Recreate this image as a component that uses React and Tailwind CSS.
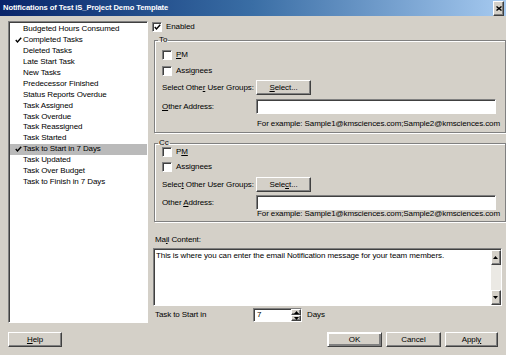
import React from 'react';

const items = [
  { label: 'Budgeted Hours Consumed' },
  { label: 'Completed Tasks', checked: true },
  { label: 'Deleted Tasks' },
  { label: 'Late Start Task' },
  { label: 'New Tasks' },
  { label: 'Predecessor Finished' },
  { label: 'Status Reports Overdue' },
  { label: 'Task Assigned' },
  { label: 'Task Overdue' },
  { label: 'Task Reassigned' },
  { label: 'Task Started' },
  { label: 'Task to Start in 7 Days', checked: true, selected: true },
  { label: 'Task Updated' },
  { label: 'Task Over Budget' },
  { label: 'Task to Finish in 7 Days' },
];

function Tick({ className = '' }) {
  return (
    <svg width="7" height="6" viewBox="0 0 8 7" className={className}>
      <path d="M0.8 3.6 L2.8 5.8 L7.2 0.8" fill="none" stroke="#000" strokeWidth="1.6" />
    </svg>
  );
}

function Box({ checked }) {
  return (
    <span className="w-[10px] h-[10px] shrink-0 flex items-center justify-center bg-white border border-t-[#808080] border-l-[#808080] border-b-white border-r-white shadow-[inset_1px_1px_0_#404040]">
      {checked && <Tick />}
    </span>
  );
}

function Btn({ children, className = '' }) {
  return (
    <div className={`h-[15px] flex items-center justify-center bg-[#d4d0c8] border border-t-white border-l-white border-b-[#404040] border-r-[#404040] shadow-[inset_-1px_-1px_0_#808080] ${className}`}>
      {children}
    </div>
  );
}

function Field({ className = '' }) {
  return (
    <div className={`bg-white border border-t-[#808080] border-l-[#808080] border-b-white border-r-white shadow-[inset_1px_1px_0_#404040] ${className}`} />
  );
}

function Arrow({ up }) {
  return (
    <svg width="5" height="3" viewBox="0 0 5 3">
      <path d={up ? 'M2.5 0 L5 3 L0 3 Z' : 'M0 0 L5 0 L2.5 3 Z'} fill="#000" />
    </svg>
  );
}

function Group({ title, cc }) {
  return (
    <fieldset className="ml-[3px] border border-[#808080] shadow-[inset_1px_1px_0_#fff,1px_1px_0_#fff] pl-[7px] pr-[5px]">
      <legend className="-ml-[4px] px-[1px] leading-[10px]">{title}</legend>
      <div className={`flex flex-col ${cc ? '-mt-[1px] pb-[2px]' : 'pt-[5px] pb-[3px]'}`}>
        <div className="flex items-center h-[10px] gap-[4px]">
          <Box />
          <span>{cc ? <>P<u>M</u></> : <><u>P</u>M</>}</span>
        </div>
        <div className={`flex items-center h-[10px] gap-[4px] ${cc ? 'mt-[5px]' : 'mt-[6px]'}`}>
          <Box />
          <span>{cc ? 'Assignees' : <>Assi<u>g</u>nees</>}</span>
        </div>
        <div className={`flex items-center ${cc ? 'mt-[5px]' : 'mt-[4px]'}`}>
          <span className="w-[94px] whitespace-nowrap">{cc ? <>Selec<u>t</u> Other User Groups:</> : <>Select Othe<u>r</u> User Groups:</>}</span>
          <Btn className="w-[55px] h-[13px]">{cc ? <>Sele<u>c</u>t...</> : <><u>S</u>elect...</>}</Btn>
        </div>
        <div className={`flex items-center ${cc ? 'mt-[3px]' : 'mt-[4px]'}`}>
          <span className="w-[94px]">{cc ? <>Other <u>A</u>ddress:</> : <><u>O</u>ther Address:</>}</span>
          <Field className="w-[240px] h-[15px]" />
        </div>
        <div className={`pl-[95px] h-[10px] flex items-center whitespace-nowrap ${cc ? '-mt-[1px]' : 'mt-[5px]'}`}>
          For example: Sample1@kmsciences.com;Sample2@kmsciences.com
        </div>
      </div>
    </fieldset>
  );
}

export default function App() {
  return (
    <div className="w-[506px] h-[355px] overflow-hidden flex flex-col bg-[#d4d0c8] text-black text-[8px] tracking-[-0.1px] font-['Liberation_Sans',Arial,sans-serif]">
      {/* title bar */}
      <div className="h-[16px] shrink-0 flex items-center justify-between pl-[3px] pr-[2px] bg-gradient-to-r from-[#0a246a] via-[#3a6ea5] to-[#a6caf0]">
        <span className="text-white font-bold text-[7.6px] tracking-[-0.1px]">Notifications of Test iS_Project Demo Template</span>
        <Btn className="w-[11px] h-[10px]">
          <svg width="6" height="5" viewBox="0 0 6 5">
            <path d="M0.5 0.5 L5.5 4.5 M5.5 0.5 L0.5 4.5" stroke="#000" strokeWidth="1.4" />
          </svg>
        </Btn>
      </div>

      {/* main */}
      <div className="flex items-start pt-[5px] pl-[8px] pr-[4px] h-[307px]">
        {/* notification list */}
        <div className="w-[140px] h-[302px] shrink-0 bg-white border border-t-[#808080] border-l-[#808080] border-b-white border-r-white shadow-[inset_1px_1px_0_#404040] pt-[2px] pl-[1px]">
          {items.map((it) => (
            <div key={it.label} className={`h-[10.9px] flex items-center relative pl-[13px] ${it.selected ? 'bg-[#bababa]' : ''}`}>
              {it.checked && <Tick className="absolute left-[5px] top-[2.5px]" />}
              <span>{it.label}</span>
            </div>
          ))}
        </div>

        {/* settings panel */}
        <div className="flex-1 ml-[3px] flex flex-col">
          <div className="flex items-center h-[12px] gap-[4px] ml-[1px]">
            <Box checked />
            <span>Enabled</span>
          </div>
          <div className="mt-[2px]">
            <Group title="To" />
          </div>
          <div className="mt-[5px]">
            <Group title="Cc" cc />
          </div>
          <div className="mt-[13px] ml-[4px] h-[10px] flex items-center">
            Ma<u>i</u>l Content:
          </div>
          <div className="mt-[3px] ml-[2px] mr-[4px] h-[58px] flex bg-white border border-t-[#808080] border-l-[#808080] border-b-white border-r-white shadow-[inset_1px_1px_0_#404040]">
            <div className="flex-1 pl-[2px] pt-[2px] leading-[10px]">
              This is where you can enter the email Notification message for your team members.
            </div>
            <div className="w-[10px] flex flex-col bg-[#ebe9e4] mt-[1px]">
              <Btn className="w-[10px] h-[10px]"><Arrow up /></Btn>
              <div className="flex-1" />
              <Btn className="w-[10px] h-[10px]"><Arrow /></Btn>
            </div>
          </div>
          <div className="mt-[2px] flex items-center h-[14px]">
            <span className="ml-[4px] w-[98px]">Task to Start in</span>
            <div className="flex h-[14px] w-[49px] bg-white border border-t-[#808080] border-l-[#808080] border-b-white border-r-white shadow-[inset_1px_1px_0_#404040]">
              <span className="flex-1 pl-[3px] leading-[12px]">7</span>
              <div className="w-[10px] flex flex-col">
                <Btn className="w-[10px] h-[6px]"><Arrow up /></Btn>
                <Btn className="w-[10px] h-[6px]"><Arrow /></Btn>
              </div>
            </div>
            <span className="ml-[5px]">Days</span>
          </div>
        </div>
      </div>

      {/* buttons */}
      <div className="flex items-center mt-[9px] pl-[8px] pr-[8px]">
        <Btn className="w-[54px]"><u>H</u>elp</Btn>
        <div className="flex-1" />
        <Btn className="w-[55px] border-black shadow-[inset_1px_1px_0_#fff,inset_-2px_-2px_0_#808080]">OK</Btn>
        <Btn className="w-[55px] ml-[4px]">Cancel</Btn>
        <Btn className="w-[53px] ml-[4px]">Appl<u>y</u></Btn>
      </div>
    </div>
  );
}
